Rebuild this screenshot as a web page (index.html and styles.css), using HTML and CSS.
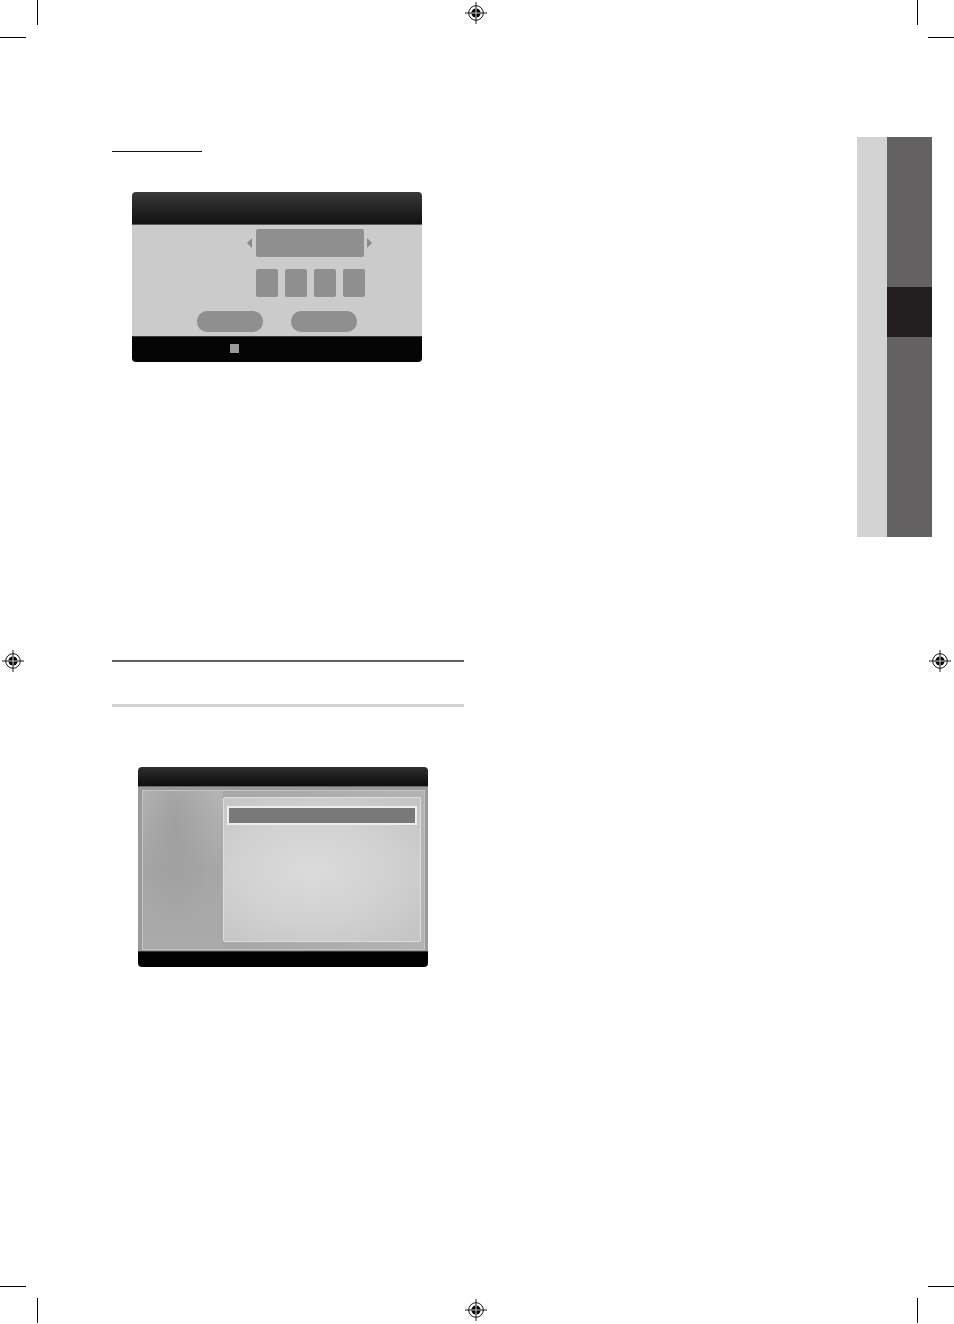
FILE: index.html
```html
<!DOCTYPE html>
<html>
<head>
<meta charset="utf-8">
<link rel="stylesheet" href="styles.css">
</head>
<body>
<div class="page">
  <div class="col">
    <div class="heading-rule"></div>

    <div class="dlg1">
      <div class="dlg1-head"></div>
      <div class="dlg1-body">
        <div class="sel-row">
          <span class="arrow arrow-left"></span>
          <span class="sel-box"></span>
          <span class="arrow arrow-right"></span>
        </div>
        <div class="pin-row">
          <span class="pin"></span><span class="pin"></span><span class="pin"></span><span class="pin"></span>
        </div>
        <div class="btn-row">
          <span class="btn"></span><span class="btn"></span>
        </div>
      </div>
      <div class="dlg1-foot"><span class="foot-sq"></span></div>
    </div>

    <div class="rule-dark"></div>
    <div class="rule-light"></div>

    <div class="dlg2">
      <div class="dlg2-head"></div>
      <div class="dlg2-body">
        <div class="dlg2-frame">
          <div class="dlg2-left"></div>
          <div class="dlg2-panel">
            <div class="dlg2-bar"></div>
          </div>
        </div>
      </div>
      <div class="dlg2-foot"></div>
    </div>
  </div>

  <div class="tab">
    <div class="tab-light"></div>
    <div class="tab-dark">
      <div class="tab-seg1"></div>
      <div class="tab-seg2"></div>
      <div class="tab-seg3"></div>
    </div>
  </div>

  <!-- print crop marks -->
  <div class="crop v tl"></div><div class="crop h tl-h"></div>
  <div class="crop v tr"></div><div class="crop h tr-h"></div>
  <div class="crop v bl"></div><div class="crop h bl-h"></div>
  <div class="crop v br"></div><div class="crop h br-h"></div>

  <!-- registration marks -->
  <svg class="reg reg-top" viewBox="0 0 24 24" width="24" height="24">
    <circle cx="12" cy="12" r="7.3" fill="none" stroke="#000" stroke-width="0.9"/>
    <circle cx="12" cy="12" r="4.6" fill="#000"/>
    <line x1="1" y1="12" x2="23" y2="12" stroke="#000" stroke-width="0.9"/>
    <line x1="12" y1="1" x2="12" y2="23" stroke="#000" stroke-width="0.9"/>
    <line x1="7.4" y1="12" x2="16.6" y2="12" stroke="#fff" stroke-width="0.8"/>
    <line x1="12" y1="7.4" x2="12" y2="16.6" stroke="#fff" stroke-width="0.8"/>
  </svg>
  <svg class="reg reg-left" viewBox="0 0 24 24" width="24" height="24">
    <circle cx="12" cy="12" r="7.3" fill="none" stroke="#000" stroke-width="0.9"/>
    <circle cx="12" cy="12" r="4.6" fill="#000"/>
    <line x1="1" y1="12" x2="23" y2="12" stroke="#000" stroke-width="0.9"/>
    <line x1="12" y1="1" x2="12" y2="23" stroke="#000" stroke-width="0.9"/>
    <line x1="7.4" y1="12" x2="16.6" y2="12" stroke="#fff" stroke-width="0.8"/>
    <line x1="12" y1="7.4" x2="12" y2="16.6" stroke="#fff" stroke-width="0.8"/>
  </svg>
  <svg class="reg reg-right" viewBox="0 0 24 24" width="24" height="24">
    <circle cx="12" cy="12" r="7.3" fill="none" stroke="#000" stroke-width="0.9"/>
    <circle cx="12" cy="12" r="4.6" fill="#000"/>
    <line x1="1" y1="12" x2="23" y2="12" stroke="#000" stroke-width="0.9"/>
    <line x1="12" y1="1" x2="12" y2="23" stroke="#000" stroke-width="0.9"/>
    <line x1="7.4" y1="12" x2="16.6" y2="12" stroke="#fff" stroke-width="0.8"/>
    <line x1="12" y1="7.4" x2="12" y2="16.6" stroke="#fff" stroke-width="0.8"/>
  </svg>
  <svg class="reg reg-bottom" viewBox="0 0 24 24" width="24" height="24">
    <circle cx="12" cy="12" r="7.3" fill="none" stroke="#000" stroke-width="0.9"/>
    <circle cx="12" cy="12" r="4.6" fill="#000"/>
    <line x1="1" y1="12" x2="23" y2="12" stroke="#000" stroke-width="0.9"/>
    <line x1="12" y1="1" x2="12" y2="23" stroke="#000" stroke-width="0.9"/>
    <line x1="7.4" y1="12" x2="16.6" y2="12" stroke="#fff" stroke-width="0.8"/>
    <line x1="12" y1="7.4" x2="12" y2="16.6" stroke="#fff" stroke-width="0.8"/>
  </svg>
</div>
</body>
</html>
```
FILE: styles.css
```css
html, body {
  margin: 0;
  padding: 0;
  background: #fff;
  font-family: "Liberation Sans", Arial, sans-serif;
}

.page {
  position: relative;
  width: 954px;
  height: 1324px;
  display: flex;
  align-items: flex-start;
  overflow: hidden;
}

.col {
  margin-left: 112px;
  width: 352px;
  display: flex;
  flex-direction: column;
}

.heading-rule {
  margin-top: 151px;
  width: 90px;
  height: 1px;
  background: #111;
}

/* Dialog 1 */
.dlg1 {
  margin-top: 40px;
  margin-left: 20px;
  width: 290px;
  height: 170px;
  border-radius: 4px;
  overflow: hidden;
  display: flex;
  flex-direction: column;
}
.dlg1-head {
  height: 32px;
  background: linear-gradient(#3a3a3a, #1c1c1c 70%, #121212);
  border-bottom: 1px solid #5a5a5a;
}
.dlg1-body {
  height: 112px;
  background: #cbcbcb;
  box-sizing: border-box;
  padding: 4px 0 0 115px;
  display: flex;
  flex-direction: column;
  border-bottom: 1px solid #3a3a3a;
}
.sel-row {
  display: flex;
  align-items: center;
  height: 28px;
}
.arrow {
  width: 0;
  height: 0;
  border-top: 5px solid transparent;
  border-bottom: 5px solid transparent;
}
.arrow-left {
  border-right: 5px solid #8a8a8a;
  margin-right: 4px;
}
.arrow-right {
  border-left: 5px solid #8a8a8a;
  margin-left: 3px;
}
.sel-box {
  width: 108px;
  height: 28px;
  background: #8f8f8f;
  border-radius: 2px;
}
.pin-row {
  margin-top: 12px;
  margin-left: 9px;
  display: flex;
  gap: 7px;
}
.pin {
  width: 22px;
  height: 28px;
  background: #8f8f8f;
  border-radius: 2px;
}
.btn-row {
  margin-top: 14px;
  margin-left: -115px;
  display: flex;
  justify-content: center;
  gap: 28px;
}
.btn {
  width: 66px;
  height: 21px;
  background: #8f8f8f;
  border-radius: 10px;
}
.dlg1-foot {
  flex: 1;
  background: #050505;
}
.foot-sq {
  display: block;
  margin-top: 7px;
  margin-left: 98px;
  width: 9px;
  height: 9px;
  background: #9a9a9a;
}

/* Rules */
.rule-dark {
  margin-top: 298px;
  height: 2px;
  background: #626262;
}
.rule-light {
  margin-top: 42px;
  height: 3px;
  background: #d1d1d1;
}

/* Dialog 2 */
.dlg2 {
  margin-top: 60px;
  margin-left: 26px;
  width: 290px;
  height: 200px;
  border-radius: 4px;
  overflow: hidden;
  display: flex;
  flex-direction: column;
}
.dlg2-head {
  height: 19px;
  background: linear-gradient(#2e2e2e, #1a1a1a 60%, #0e0e0e);
  border-bottom: 1px solid #6a6a6a;
}
.dlg2-body {
  height: 164px;
  box-sizing: border-box;
  padding: 3px 3px 1px 4px;
  background: #9a9a9a;
  display: flex;
}
.dlg2-frame {
  flex: 1;
  border: 1px solid #c4c4c4;
  display: flex;
  background: linear-gradient(90deg, #a3a3a3, #a8a8a8 40%, #b3b3b3);
}
.dlg2-left {
  width: 80px;
  background:
    radial-gradient(ellipse at 40% 20%, rgba(150,150,150,0.6), rgba(170,170,170,0) 60%),
    linear-gradient(#b4b4b4, #a6a6a6 50%, #aaaaaa);
}
.dlg2-panel {
  margin: 6px 3px 7px 0;
  flex: 1;
  border: 1px solid #dedede;
  border-radius: 2px;
  background: radial-gradient(ellipse at 45% 50%, #dbdbdb, #d1d1d1 50%, #c3c3c3);
  box-sizing: border-box;
  padding: 8px 3px 0 3px;
}
.dlg2-bar {
  height: 19px;
  box-sizing: border-box;
  background: #7b7878;
  border: 2px solid #eeeeee;
}
.dlg2-foot {
  flex: 1;
  background: #020202;
  border-top: 1px solid #3a3a3a;
}

/* Side tab */
.tab {
  margin-left: auto;
  margin-right: 22px;
  margin-top: 137px;
  display: flex;
}
.tab-light {
  width: 30px;
  height: 400px;
  background: #d3d3d3;
}
.tab-dark {
  width: 45px;
  display: flex;
  flex-direction: column;
}
.tab-seg1 { height: 150px; background: #636161; }
.tab-seg2 { height: 50px; background: #231f20; }
.tab-seg3 { height: 200px; background: #636161; }

/* Crop marks */
.crop {
  position: absolute;
  background: #000;
}
.crop.v { width: 1px; height: 25px; }
.crop.h { width: 26px; height: 1px; }
.tl { left: 37px; top: 0; }
.tl-h { left: 0; top: 37px; }
.tr { left: 917px; top: 0; }
.tr-h { left: 928px; top: 37px; }
.bl { left: 37px; top: 1298px; height: 26px; }
.bl-h { left: 0; top: 1286px; }
.br { left: 917px; top: 1298px; height: 26px; }
.br-h { left: 928px; top: 1286px; }

/* Registration marks */
.reg { position: absolute; }
.reg-top { left: 464px; top: 1px; }
.reg-left { left: 1px; top: 649px; }
.reg-right { left: 928px; top: 649px; }
.reg-bottom { left: 464px; top: 1298px; }
```
